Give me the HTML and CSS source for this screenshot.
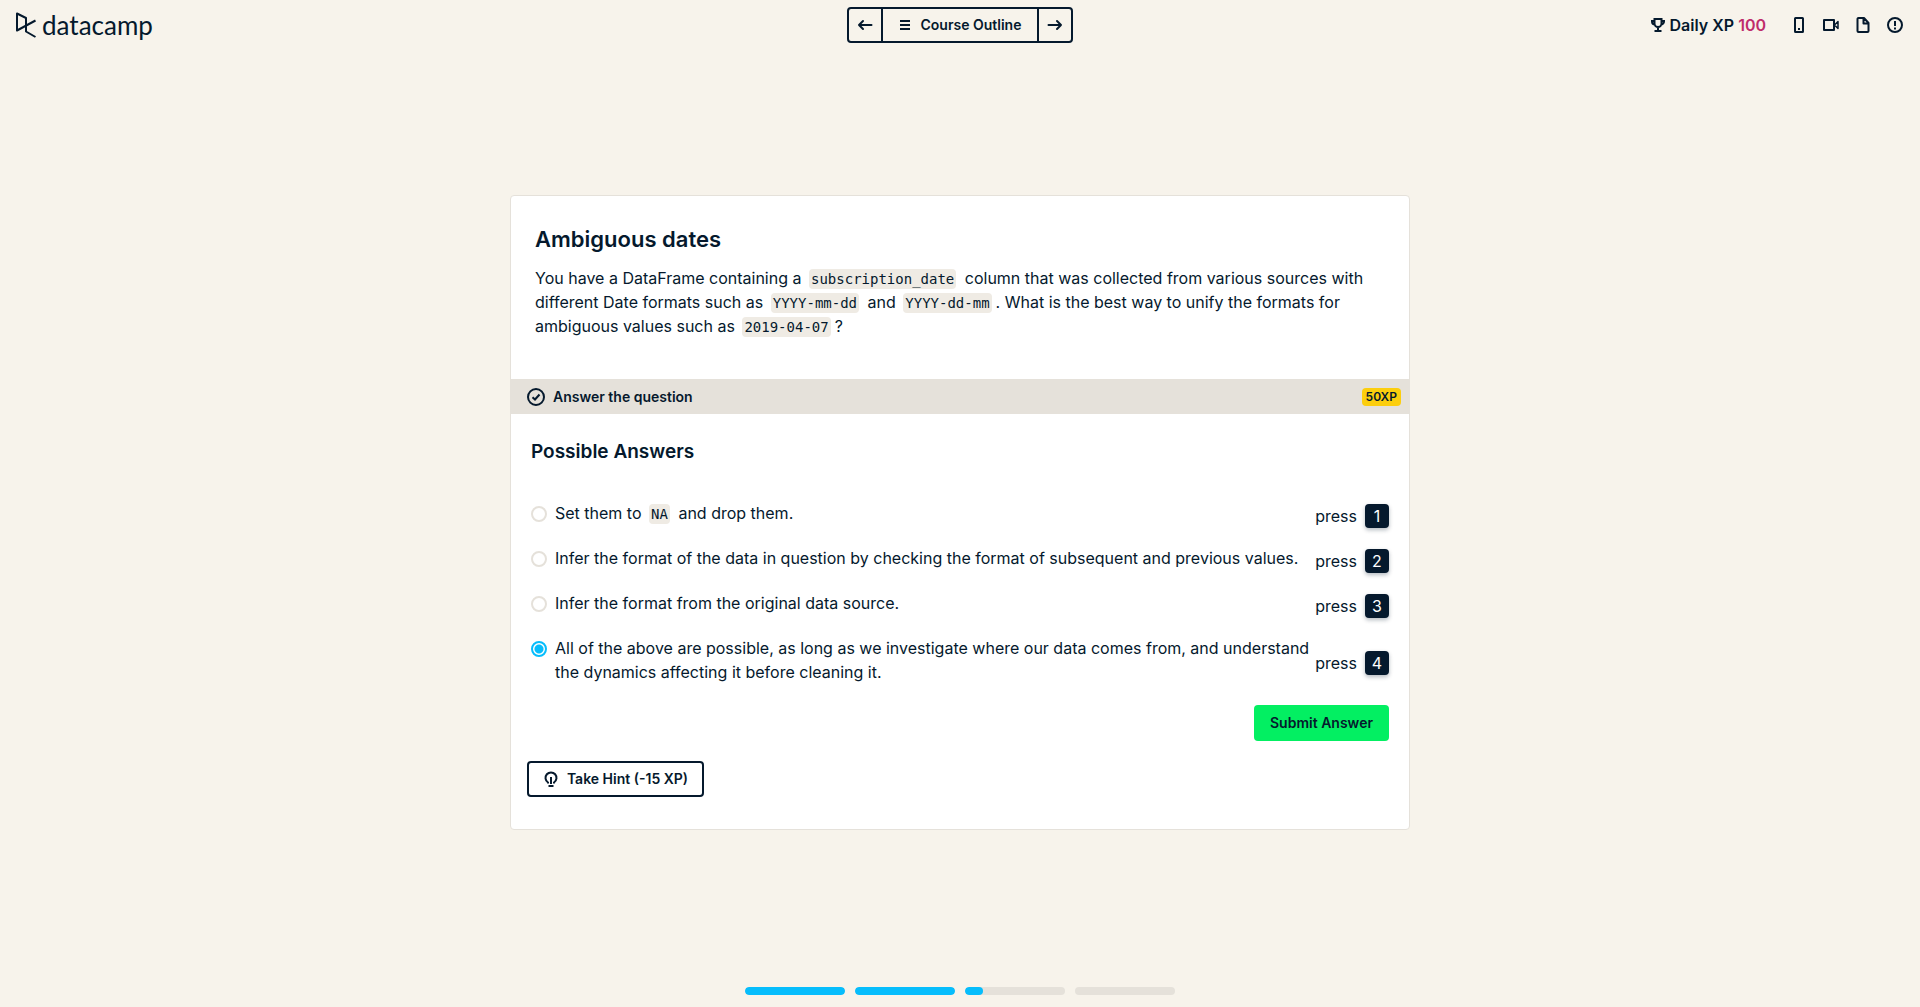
FILE: index.html
```html
<!DOCTYPE html>
<html lang="en">
<head>
<meta charset="utf-8">
<title>Ambiguous dates | DataCamp</title>
<link rel="stylesheet" href="styles.css">
</head>
<body>
<header class="topbar">
  <a class="logo" href="#" aria-label="DataCamp home">
    <svg class="logo-mark" width="21" height="28" viewBox="1 0 21 28" fill="none" stroke="currentColor" stroke-width="2" stroke-linejoin="round"><path d="M20.500 9.500L2 19.500V2.500L11 7V20.500L20.500 26"/></svg>
    <span class="logo-text">datacamp</span>
  </a>
  <nav class="course-nav" aria-label="Course">
    <button class="nav-btn" type="button" aria-label="Previous"><svg width="16" height="16" viewBox="0 0 16 16" fill="none" stroke="currentColor" stroke-width="2" stroke-linecap="round" stroke-linejoin="round"><path d="M14.500 8H2M6 4L2 8l4 4"/></svg></button>
    <button class="nav-btn nav-outline" type="button"><svg width="12" height="12" viewBox="0 0 12 12" stroke="currentColor" stroke-width="2"><path d="M1 2h10M1 6h10M1 10h10"/></svg>Course Outline</button>
    <button class="nav-btn" type="button" aria-label="Next"><svg width="16" height="16" viewBox="0 0 16 16" fill="none" stroke="currentColor" stroke-width="2" stroke-linecap="round" stroke-linejoin="round"><path d="M1.500 8H14M10 4l4 4-4 4"/></svg></button>
  </nav>
  <div class="tools">
    <div class="daily">
      <svg width="16" height="16" viewBox="0 0 16 16" fill="none" stroke="currentColor" stroke-width="2"><path d="M4.500 2h7v4.500a3.500 3.500 0 0 1-7 0zM4.500 4H2v.5A3 3 0 0 0 5 7.500M11.500 4H14v.5A3 3 0 0 1 11 7.500M8 10v4M4.500 14h7"/></svg>
      <span>Daily XP <span class="xp">100</span></span>
    </div>
    <div class="tool-icons">
      <button class="icon-btn" type="button" aria-label="Mobile app"><svg width="18" height="18" viewBox="0 0 18 18" fill="none" stroke="currentColor" stroke-width="2"><rect x="5" y="2" width="8" height="14" rx="0.500"/><path d="M8 13h2"/></svg></button>
      <button class="icon-btn" type="button" aria-label="Video"><svg width="18" height="18" viewBox="0 0 18 18" fill="none" stroke="currentColor" stroke-width="2" stroke-linejoin="round"><path d="M2 4h10v10H2z"/><path d="M12.500 9L16 5.500v7z" stroke-width="1.500"/></svg></button>
      <button class="icon-btn" type="button" aria-label="Slides"><svg width="18" height="18" viewBox="0 0 18 18" fill="none" stroke="currentColor" stroke-width="2" stroke-linejoin="round"><path d="M10 2H4.500a1 1 0 0 0-1 1v12a1 1 0 0 0 1 1h9a1 1 0 0 0 1-1V7zM9.500 2v5.500h5"/></svg></button>
      <button class="icon-btn" type="button" aria-label="Report an issue"><svg width="18" height="18" viewBox="0 0 18 18" fill="none" stroke="currentColor" stroke-width="2"><circle cx="9" cy="9" r="7"/><path d="M9 5v5M9 11.500v2"/></svg></button>
    </div>
  </div>
</header>

<main class="stage">
  <form class="card">
    <section class="question">
      <h1>Ambiguous dates</h1>
      <p>You have a DataFrame containing a <code>subscription_date</code> column that was collected from various sources with different Date formats such as <code>YYYY-mm-dd</code> and <code>YYYY-dd-mm</code>. What is the best way to unify the formats for ambiguous values such as <code>2019-04-07</code>?</p>
    </section>
    <div class="task-bar">
      <svg width="18" height="18" viewBox="0 0 18 18" fill="none" stroke="currentColor" stroke-width="2"><circle cx="9" cy="9" r="8"/><path d="M5.500 9.200l2.500 2.300 4.500-5"/></svg>
      <span>Answer the question</span>
      <span class="badge">50XP</span>
    </div>
    <section class="answers">
      <h2>Possible Answers</h2>
      <ul class="options">
        <li><input type="radio" name="answer" id="a1"><label for="a1">Set them to <code>NA</code> and drop them.</label><span class="press">press <kbd>1</kbd></span></li>
        <li><input type="radio" name="answer" id="a2"><label for="a2">Infer the format of the data in question by checking the format of subsequent and previous values.</label><span class="press">press <kbd>2</kbd></span></li>
        <li><input type="radio" name="answer" id="a3"><label for="a3">Infer the format from the original data source.</label><span class="press">press <kbd>3</kbd></span></li>
        <li><input type="radio" name="answer" id="a4" checked><label for="a4">All of the above are possible, as long as we investigate where our data comes from, and understand the dynamics affecting it before cleaning it.</label><span class="press">press <kbd>4</kbd></span></li>
      </ul>
      <button class="submit" type="button">Submit Answer</button>
    </section>
    <div class="hint-row">
      <button class="hint" type="button"><svg width="16" height="18" viewBox="0 0 16 18" fill="none" stroke="currentColor" stroke-width="2"><path d="M5 13.500V12.500A5.500 5.500 0 1 1 11 12.500V13.500M8 7v7M5.500 16h5"/></svg>Take Hint (-15 XP)</button>
    </div>
  </form>
</main>

<footer class="progress" aria-label="Chapter progress">
  <span class="step"><span class="fill" style="width:100%"></span></span>
  <span class="step"><span class="fill" style="width:100%"></span></span>
  <span class="step"><span class="fill" style="width:18%"></span></span>
  <span class="step"></span>
</footer>
</body>
</html>
```
FILE: styles.css
```css
* { box-sizing: border-box; }

body {
  margin: 0;
  min-height: 100vh;
  display: flex;
  flex-direction: column;
  background: #f7f3eb;
  color: #05192d;
  font: 16px/24px Inter, "Liberation Sans", sans-serif;
}

button {
  font: inherit;
  color: inherit;
  background: none;
  border: 0;
  padding: 0;
  cursor: pointer;
}

svg { display: block; flex: none; }

.topbar {
  display: grid;
  grid-template-columns: 1fr auto 1fr;
  align-items: center;
  height: 50px;
  padding: 0 16px;
}

.logo {
  display: flex;
  align-items: center;
  gap: 5px;
  color: inherit;
  text-decoration: none;
}
.logo-text { font: 26px/32px Lato, sans-serif; }

.course-nav {
  display: flex;
  border: 2px solid #05192d;
  border-radius: 4px;
}
.nav-btn {
  display: flex;
  align-items: center;
  justify-content: center;
  width: 32px;
  height: 32px;
  font-size: 14px;
  font-weight: 600;
}
.nav-outline {
  width: 158px;
  gap: 10px;
  border: solid #05192d;
  border-width: 0 2px;
}

.tools {
  display: flex;
  align-items: center;
  justify-content: flex-end;
  gap: 24px;
}
.daily {
  display: flex;
  align-items: center;
  gap: 4px;
  font-weight: 600;
}
.xp { color: #bf2c6b; }
.tool-icons { display: flex; gap: 14px; }

.stage {
  flex: 1;
  display: flex;
  align-items: center;
  justify-content: center;
}

.card {
  width: 100%;
  max-width: 900px;
  background: #fff;
  border: 1px solid #e5e1da;
  border-radius: 4px;
}

.question { padding: 25px 24px 41px; }
h1 {
  margin: 0 0 9px;
  font-size: 22px;
  line-height: 36px;
  font-weight: 600;
}
p { margin: 0; }

code {
  margin: 0 4px 0 3px;
  padding: 2px;
  border-radius: 4px;
  background: #efebe4;
  font: 14px/20px "DejaVu Sans Mono", monospace;
}

.task-bar {
  display: flex;
  align-items: center;
  gap: 8px;
  height: 35px;
  padding: 0 8px 0 16px;
  background: #e5e1da;
  font-size: 14px;
  font-weight: 600;
}
.badge {
  margin-left: auto;
  padding: 0 4px;
  border-radius: 4px;
  background: #fcce0d;
  font-size: 12px;
  line-height: 18px;
}

.answers {
  display: flex;
  flex-direction: column;
  padding: 24px 20px 20px;
}
h2 {
  margin: 0 0 35px;
  font-size: 19px;
  line-height: 28px;
  font-weight: 600;
}
.options {
  display: flex;
  flex-direction: column;
  gap: 15px;
  margin: 0 0 15px;
  padding: 0;
  list-style: none;
}
.options li {
  display: grid;
  grid-template-columns: auto 1fr auto;
}
.options label { padding-bottom: 6px; }
.options input {
  appearance: none;
  width: 16px;
  height: 16px;
  margin: 5px 8px 0 0;
  border: 2px solid #e5e1da;
  border-radius: 50%;
}
.options input:checked {
  border-color: #06bdfc;
  background: radial-gradient(circle, #06bdfc 4px, #fff 5px);
}
.press {
  display: flex;
  align-items: center;
  gap: 8px;
}
kbd {
  width: 24px;
  border-radius: 4px;
  background: #05192d;
  box-shadow: 0 2px 4px rgba(5, 25, 45, 0.3);
  color: #fff;
  font: inherit;
  text-align: center;
}

.submit {
  align-self: flex-end;
  width: 135px;
  height: 36px;
  border-radius: 4px;
  background: #03ef62;
  font-size: 14px;
  font-weight: 600;
}

.hint-row { padding: 0 16px 32px; }
.hint {
  display: flex;
  align-items: center;
  justify-content: center;
  gap: 8px;
  width: 177px;
  height: 36px;
  border: 2px solid #05192d;
  border-radius: 4px;
  font-size: 14px;
  font-weight: 600;
}

.progress {
  display: flex;
  justify-content: center;
  gap: 10px;
  padding: 12px;
}
.step {
  width: 100px;
  height: 8px;
  border-radius: 4px;
  overflow: hidden;
  background: #e5e1da;
}
.fill {
  display: block;
  height: 100%;
  border-radius: 4px;
  background: #06bdfc;
}
```
